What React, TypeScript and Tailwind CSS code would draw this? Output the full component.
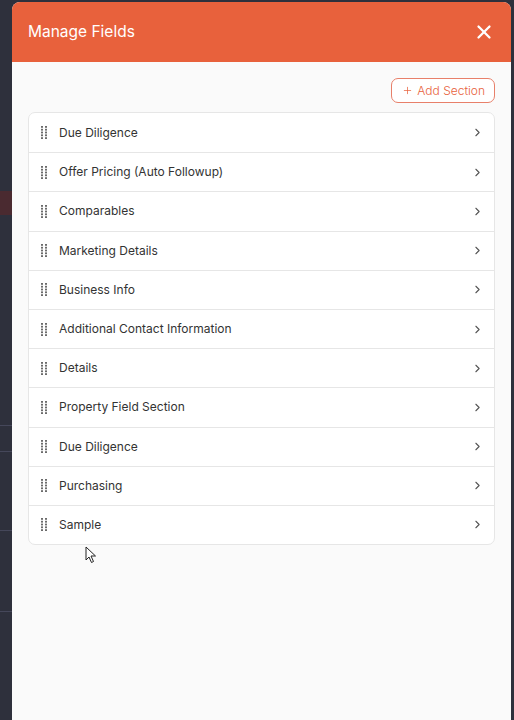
import { X, ChevronRight, Plus } from 'lucide-react';

const sections = [
  'Due Diligence',
  'Offer Pricing (Auto Followup)',
  'Comparables',
  'Marketing Details',
  'Business Info',
  'Additional Contact Information',
  'Details',
  'Property Field Section',
  'Due Diligence',
  'Purchasing',
  'Sample',
];

// Two columns of tiny dots used as the drag handle
function DragHandle() {
  return (
    <svg width="6" height="13" viewBox="0 0 6 13" className="shrink-0 text-[#6b6b6b]">
      {[0, 1, 2, 3, 4].map((r) => (
        <g key={r}>
          <rect x="0" y={r * 2.8} width="2" height="1.8" fill="currentColor" />
          <rect x="4" y={r * 2.8} width="2" height="1.8" fill="currentColor" />
        </g>
      ))}
    </svg>
  );
}

function Cursor() {
  return (
    <svg width="12" height="18" viewBox="0 0 12 18" className="absolute left-[85px] top-[546px]">
      <path d="M1 1 L1 14 L4 11 L6.5 16.5 L8.5 15.5 L6 10 L10.5 10 Z" fill="#fff" stroke="#222" strokeWidth="1" />
    </svg>
  );
}

export default function App() {
  return (
    <div
      className="relative flex h-[720px] w-[514px] overflow-hidden bg-[#2e303c]"
      style={{ fontFamily: 'Inter, "Noto Sans", sans-serif' }}
    >
      {/* backdrop bits peeking out on the left */}
      <div className="absolute left-0 top-[191px] h-[24px] w-[12px] bg-[#4a2a30]" />
      <div className="absolute left-0 top-[425px] h-px w-[12px] bg-[#45475a]" />
      <div className="absolute left-0 top-[451px] h-px w-[12px] bg-[#45475a]" />
      <div className="absolute left-0 top-[530px] h-px w-[12px] bg-[#45475a]" />
      <div className="absolute left-0 top-[611px] h-px w-[12px] bg-[#45475a]" />

      <div className="ml-[12px] mt-[2px] flex w-[499px] flex-col overflow-hidden rounded-t-[8px] bg-[#fafafa]">
        <div className="flex h-[60px] shrink-0 items-center justify-between bg-[#e8613c] pl-[16px] pr-[16px]">
          <span className="text-[15.5px] font-normal text-white">Manage Fields</span>
          <X className="h-[22px] w-[22px] text-white" strokeWidth={2.5} />
        </div>

        <div className="flex flex-col pl-[16px] pr-[16px] pt-[16px]">
          <div className="flex justify-end">
            <button className="flex h-[25px] items-center gap-[4px] rounded-[7px] border border-[#e8806a] bg-white pl-[10px] pr-[9px] text-[12px] font-light text-[#e8613c]">
              <Plus className="h-[11px] w-[11px]" strokeWidth={1.6} />
              Add Section
            </button>
          </div>

          <div className="mt-[9px] overflow-hidden rounded-[7px] border border-[#e6e6e6] bg-white">
            {sections.map((s, i) => (
              <div
                key={i}
                className={`flex h-[39.2px] items-center pl-[12px] pr-[10px] ${i > 0 ? 'border-t border-[#e6e6e6]' : ''}`}
              >
                <DragHandle />
                <span className="ml-[12px] flex-1 text-[12px] text-[#333]">{s}</span>
                <ChevronRight className="h-[13px] w-[13px] text-[#555]" strokeWidth={2} />
              </div>
            ))}
          </div>
        </div>
      </div>

      <Cursor />
    </div>
  );
}
